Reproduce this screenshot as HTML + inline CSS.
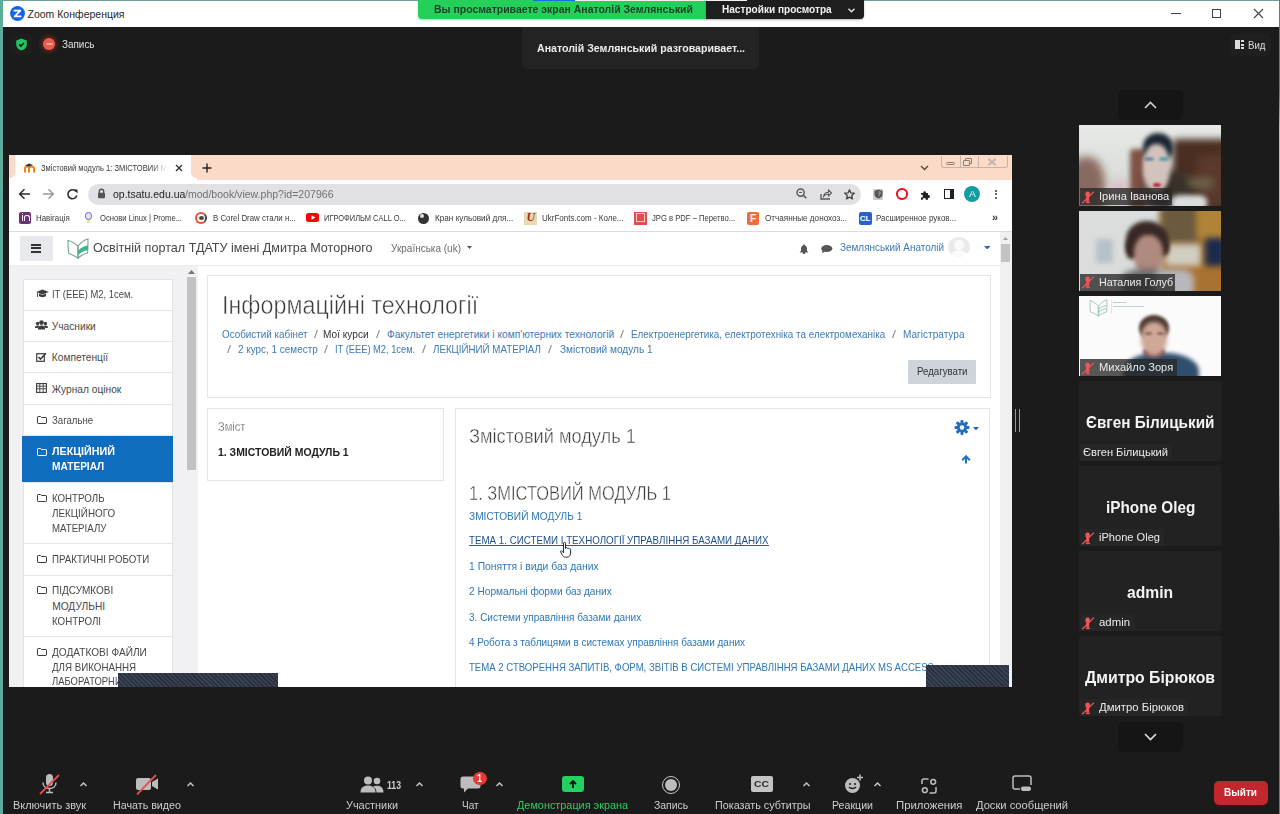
<!DOCTYPE html>
<html><head><meta charset="utf-8"><style>
*{margin:0;padding:0;box-sizing:border-box}
html,body{width:1280px;height:814px;overflow:hidden;position:relative;background:#1b1b1b;font-family:"Liberation Sans",sans-serif}
.a{position:absolute}
.T{position:absolute;white-space:nowrap;line-height:1}
</style></head><body>
<div class="a" style="left:0;top:0;width:1280px;height:1px;background:#6f9f99"></div>
<div class="a" style="left:3px;top:1px;width:1276px;height:26px;background:#fff"></div>
<div class="a" style="left:0;top:0;width:3px;height:814px;background:#5cae9a"></div>
<div class="a" style="left:3px;top:27px;width:1px;height:787px;background:#151515"></div>
<div class="a" style="left:1279px;top:0;width:1px;height:814px;background:linear-gradient(180deg,#3d8a86 0,#3d8a86 90px,#b9bcbf 130px,#b9bcbf 480px,#4f8784 540px,#4f8784 814px)"></div>
<svg class="a" style="left:10px;top:6px" width="15" height="15" viewBox="0 0 15 15"><circle cx="7.5" cy="7.5" r="7.4" fill="#1264e8"/><path d="M4.4 4.7h6L4.6 10.4h6.1" stroke="#fff" stroke-width="1.8" fill="none" stroke-linejoin="round" stroke-linecap="round"/></svg>
<div id="t6" class="T" style="left:27.50px;top:8.88px;font-size:10.50px;color:#1f1f1f;font-weight:normal;font-family:'Liberation Sans', sans-serif;">Zoom Конференция</div>
<div class="a" style="left:1171px;top:13px;width:10px;height:1px;background:#444"></div>
<div class="a" style="left:1212px;top:9px;width:9px;height:9px;border:1px solid #444"></div>
<svg class="a" style="left:1253px;top:8px" width="11" height="11" viewBox="0 0 11 11"><path d="M1 1L10 10M10 1L1 10" stroke="#444" stroke-width="1.1"/></svg>
<div class="a" style="left:418px;top:0;width:289px;height:19px;background:#25d05a;border-radius:0 0 0 4px;box-shadow:0 1px 2px rgba(0,0,0,.25)"></div>
<div id="t11" class="T" style="left:433.50px;top:4.22px;font-size:10.80px;color:#1d3f27;font-weight:bold;font-family:'Liberation Sans', sans-serif;transform:scaleX(0.9700);transform-origin:0 0;">Вы просматриваете экран Анатолій Землянський</div>
<div class="a" style="left:706px;top:0;width:158px;height:19px;background:#1e1e1e;border-radius:0 0 4px 0;box-shadow:0 1px 2px rgba(0,0,0,.3)"></div>
<div id="t13" class="T" style="left:721.70px;top:4.22px;font-size:10.80px;color:#f2f2f2;font-weight:bold;font-family:'Liberation Sans', sans-serif;transform:scaleX(0.9327);transform-origin:0 0;">Настройки просмотра</div>
<div class="a" style="left:533px;top:0;width:42px;height:1px;background:#1a6ee0"></div>
<div class="a" style="left:575px;top:0;width:172px;height:1px;background:#f4f0f0"></div>
<svg class="a" style="left:847px;top:7px" width="9" height="7" viewBox="0 0 9 7"><path d="M1.5 1.8L4.5 4.8L7.5 1.8" stroke="#e0e0e0" stroke-width="1.5" fill="none"/></svg>
<div class="a" style="left:11px;top:34px;width:21px;height:21px;background:#1e1e1e;border-radius:4px"></div>
<svg class="a" style="left:15px;top:38px" width="13" height="13" viewBox="0 0 13 13"><path d="M6.5 0.6L11.8 2.6V6.4C11.8 9.4 9.5 11.6 6.5 12.5C3.5 11.6 1.2 9.4 1.2 6.4V2.6Z" fill="#24c35d"/><path d="M4.1 6.4L5.8 8.1L8.9 4.9" stroke="#1b1b1b" stroke-width="1.5" fill="none"/></svg>
<div class="a" style="left:43px;top:38px;width:12px;height:12px;border-radius:50%;background:#ee5a4c;box-shadow:0 0 4px 2px rgba(200,60,40,.4)"></div>
<div class="a" style="left:45.5px;top:43px;width:7px;height:2px;background:#f9a496;border-radius:1px"></div>
<div id="t21" class="T" style="left:62.00px;top:39.02px;font-size:10.80px;color:#e2e2e2;font-weight:normal;font-family:'Liberation Sans', sans-serif;transform:scaleX(0.9171);transform-origin:0 0;">Запись</div>
<div class="a" style="left:522px;top:27px;width:237px;height:42px;background:#232323;border-radius:0 0 6px 6px"></div>
<div id="t23" class="T" style="left:537.00px;top:43.02px;font-size:11.50px;color:#ececec;font-weight:bold;font-family:'Liberation Sans', sans-serif;transform:scaleX(0.9195);transform-origin:0 0;">Анатолій Землянський разговаривает...</div>
<div class="a" style="left:1230px;top:34px;width:41px;height:22px;background:#1f1f1f;border-radius:5px"></div>
<div class="a" style="left:1235px;top:40px;width:5px;height:9px;background:#dcdcdc"></div>
<div class="a" style="left:1241px;top:40px;width:3px;height:2px;background:#dcdcdc"></div>
<div class="a" style="left:1241px;top:43.5px;width:3px;height:2px;background:#dcdcdc"></div>
<div class="a" style="left:1241px;top:47px;width:3px;height:2px;background:#dcdcdc"></div>
<div id="t29" class="T" style="left:1248.00px;top:39.68px;font-size:11.20px;color:#dedede;font-weight:normal;font-family:'Liberation Sans', sans-serif;transform:scaleX(0.8642);transform-origin:0 0;">Вид</div>
<div class="a" style="left:1015px;top:409px;width:1.2px;height:23px;background:#9a9a9a"></div>
<div class="a" style="left:1019px;top:409px;width:1.2px;height:23px;background:#9a9a9a"></div>
<div class="a" style="left:9px;top:155px;width:1003px;height:532px;background:#fff"></div>
<div class="a" style="left:9px;top:155px;width:1003px;height:25px;background:#fcdac8"></div>
<div class="a" style="left:15px;top:155px;width:176px;height:26px;background:#fff;border-radius:0"></div>
<div class="a" style="left:9px;top:172px;width:6px;height:8px;background:radial-gradient(circle at 0 0,#fcdac8 6px,#fff 6.5px)"></div>
<div class="a" style="left:191px;top:172px;width:6px;height:8px;background:radial-gradient(circle at 100% 0,#fcdac8 6px,#fff 6.5px)"></div>
<svg class="a" style="left:24px;top:163px" width="12" height="10" viewBox="0 0 12 10"><path d="M1 9.5V5.5C1 4 2 3.5 3 3.5S5 4 5 5.5V9.5M5 5.5C5 4 6 3.5 7.5 3.5S10 4 10 5.5V9.5" stroke="#f98012" stroke-width="2" fill="none"/><path d="M1 2.5L5 0.5L9 2L5 3.5Z" fill="#333"/></svg>
<div id="t38" class="T" style="left:40.80px;top:163.95px;font-size:9.00px;color:#3a3a3a;font-weight:normal;font-family:'Liberation Sans', sans-serif;transform:scaleX(0.8391);transform-origin:0 0;-webkit-mask-image:linear-gradient(90deg,#000 88%,transparent);">Змістовий модуль 1: ЗМІСТОВИЙ М</div>
<svg class="a" style="left:175px;top:164px" width="8" height="8" viewBox="0 0 8 8"><path d="M1 1L7 7M7 1L1 7" stroke="#333" stroke-width="1.4"/></svg>
<svg class="a" style="left:202px;top:163px" width="10" height="10" viewBox="0 0 10 10"><path d="M5 0.5V9.5M0.5 5H9.5" stroke="#222" stroke-width="1.4"/></svg>
<svg class="a" style="left:920px;top:165px" width="9" height="6" viewBox="0 0 9 6"><path d="M1 1L4.5 4.5L8 1" stroke="#5a4a44" stroke-width="1.5" fill="none"/></svg>
<div class="a" style="left:941px;top:155.5px;width:67px;height:12.5px;border:1px solid #c8b2a6;border-top:none;border-radius:0 0 3px 3px"></div>
<div class="a" style="left:959.5px;top:155.5px;width:1px;height:12px;background:#c8b2a6"></div>
<div class="a" style="left:977.5px;top:155.5px;width:1px;height:12px;background:#c8b2a6"></div>
<div class="a" style="left:945.5px;top:161.5px;width:9px;height:3.5px;border:1px solid #8a7a72;border-radius:1.5px"></div>
<div class="a" style="left:965px;top:158px;width:7px;height:6px;border:1px solid #8a7a72;border-radius:1px"></div>
<div class="a" style="left:963px;top:160px;width:7px;height:6px;border:1px solid #8a7a72;border-radius:1px;background:#fcdac8"></div>
<svg class="a" style="left:987px;top:158px" width="10" height="8" viewBox="0 0 10 8"><path d="M1.5 1L8.5 7M8.5 1L1.5 7" stroke="#c4b4ac" stroke-width="1.8"/></svg>
<svg class="a" style="left:18px;top:188px" width="13" height="12" viewBox="0 0 13 12"><path d="M12 6H2M6.5 1.2L1.6 6L6.5 10.8" stroke="#2a2a2a" stroke-width="1.5" fill="none"/></svg>
<svg class="a" style="left:42px;top:188px" width="13" height="12" viewBox="0 0 13 12"><path d="M1 6H11M6.5 1.2L11.4 6L6.5 10.8" stroke="#9a9a9a" stroke-width="1.5" fill="none"/></svg>
<svg class="a" style="left:66px;top:187.5px" width="13" height="13" viewBox="0 0 13 13"><path d="M10.8 7.5A4.5 4.5 0 1 1 9.8 3.2" stroke="#2a2a2a" stroke-width="1.6" fill="none"/><path d="M7.5 1.5H11.5V5.5Z" fill="#2a2a2a"/></svg>
<div class="a" style="left:88px;top:183.5px;width:773px;height:21px;border-radius:10.5px;background:#e1e0e4"></div>
<svg class="a" style="left:97px;top:188px" width="9" height="11" viewBox="0 0 9 11"><path d="M2.3 5V3.5A2.2 2.2 0 0 1 6.7 3.5V5" stroke="#555" stroke-width="1.4" fill="none"/><rect x="1" y="4.8" width="7" height="5.5" rx="1" fill="#555"/></svg>
<div id="t54" class="T" style="left:112.50px;top:188.65px;font-size:11.00px;color:#222;font-weight:normal;font-family:'Liberation Sans', sans-serif;transform:scaleX(0.9533);transform-origin:0 0;">op.tsatu.edu.ua</div>
<div id="t55" class="T" style="left:184.80px;top:188.65px;font-size:11.00px;color:#707070;font-weight:normal;font-family:'Liberation Sans', sans-serif;transform:scaleX(0.9578);transform-origin:0 0;">/mod/book/view.php?id=207966</div>
<svg class="a" style="left:796px;top:188px" width="11" height="11" viewBox="0 0 11 11"><circle cx="4.6" cy="4.6" r="3.6" stroke="#555" stroke-width="1.4" fill="none"/><path d="M7.3 7.3L10.3 10.3" stroke="#555" stroke-width="1.6"/><path d="M3 4.4H6.2" stroke="#555" stroke-width="1"/></svg>
<svg class="a" style="left:819.5px;top:188.5px" width="12" height="11" viewBox="0 0 12 11"><path d="M1 5V10H10" stroke="#555" stroke-width="1.3" fill="none"/><path d="M3.5 7.5C4 4.5 6 3.2 8.5 3.2V1L11.5 4L8.5 7V5C6.5 5 5 5.8 3.5 7.5Z" stroke="#555" stroke-width="1.1" fill="none"/></svg>
<svg class="a" style="left:843.5px;top:188.5px" width="11" height="11" viewBox="0 0 11 11"><path d="M5.5 0.8L6.9 3.9L10.3 4.2L7.7 6.5L8.5 9.9L5.5 8.1L2.5 9.9L3.3 6.5L0.7 4.2L4.1 3.9Z" stroke="#444" stroke-width="1.3" fill="none" stroke-linejoin="round"/></svg>
<div class="a" style="left:872.5px;top:188.5px;width:10.5px;height:11px;background:#c9c9c9;border-radius:1px"></div>
<svg class="a" style="left:873.5px;top:189px" width="9" height="10" viewBox="0 0 9 10"><path d="M4.5 0.5L8.5 2V5C8.5 7.5 6.5 9 4.5 9.5C2.5 9 0.5 7.5 0.5 5V2Z" fill="#555"/><path d="M4.5 1.5V8.5L7.5 3Z" fill="#888"/></svg>
<div class="a" style="left:896px;top:188px;width:11.5px;height:11.5px;border-radius:50%;border:2.6px solid #ee0a17"></div>
<svg class="a" style="left:919.5px;top:189.5px" width="11" height="10" viewBox="0 0 11 10"><path d="M1 3H3.3A1.4 1.4 0 1 1 6 3H8V5.2A1.4 1.4 0 1 1 8 7.8V9.8H5.6A1.4 1.4 0 1 0 3 9.8H1V7.4A1.4 1.4 0 1 0 1 4.8Z" fill="#222"/></svg>
<div class="a" style="left:943.5px;top:189px;width:10px;height:9.5px;border:1.5px solid #222;border-right-width:4px"></div>
<div class="a" style="left:964px;top:186px;width:16px;height:16px;border-radius:50%;background:#139ca2"></div>
<div id="t65" class="T" style="left:968.50px;top:190.35px;font-size:9.00px;color:#e8f6f6;font-weight:normal;font-family:'Liberation Sans', sans-serif;transform:scaleX(1.1636);transform-origin:0 0;">A</div>
<div class="a" style="left:995px;top:189.5px;width:2.2px;height:2.2px;border-radius:50%;background:#333"></div>
<div class="a" style="left:995px;top:193px;width:2.2px;height:2.2px;border-radius:50%;background:#333"></div>
<div class="a" style="left:995px;top:196.5px;width:2.2px;height:2.2px;border-radius:50%;background:#333"></div>
<div class="a" style="left:19px;top:212px;width:12px;height:12px;border-radius:2px;background:#6b3275"></div>
<div class="a" style="left:21.5px;top:214.5px;width:1.8px;height:6px;background:#fff"></div>
<div class="a" style="left:21.5px;top:212.8px;width:1.8px;height:1.3px;background:#fff"></div>
<div class="a" style="left:24.3px;top:214.5px;width:5.5px;height:6px;border:1.8px solid #fff;border-bottom:none;border-radius:2.5px 2.5px 0 0"></div>
<div id="t73" class="T" style="left:36.30px;top:212.83px;font-size:9.50px;color:#3a3a3a;font-weight:normal;font-family:'Liberation Sans', sans-serif;transform:scaleX(0.8311);transform-origin:0 0;">Навігація</div>
<div class="a" style="left:84.5px;top:212.4px;width:7.5px;height:7.5px;border-radius:50%;border:1.6px solid #6a5fd0;background:#e8e4f4"></div>
<div class="a" style="left:86.7px;top:220px;width:3px;height:2.5px;background:#f4ea70"></div>
<div id="t76" class="T" style="left:100.00px;top:212.83px;font-size:9.50px;color:#3a3a3a;font-weight:normal;font-family:'Liberation Sans', sans-serif;transform:scaleX(0.8037);transform-origin:0 0;">Основи Linux | Prome...</div>
<div class="a" style="left:195px;top:212px;width:12px;height:12px;border-radius:50%;border:2px solid #e8552f;border-right-color:#444"></div>
<div class="a" style="left:199px;top:216px;width:5px;height:4px;border-radius:50%;background:#444"></div>
<div id="t79" class="T" style="left:212.50px;top:212.83px;font-size:9.50px;color:#3a3a3a;font-weight:normal;font-family:'Liberation Sans', sans-serif;transform:scaleX(0.8275);transform-origin:0 0;">В Corel Draw стали н...</div>
<div class="a" style="left:306px;top:213px;width:12.5px;height:9px;border-radius:2.5px;background:#f00"></div>
<svg class="a" style="left:310.5px;top:215px" width="5" height="5" viewBox="0 0 5 5"><path d="M0.5 0.3L4.5 2.5L0.5 4.7Z" fill="#fff"/></svg>
<div id="t82" class="T" style="left:323.80px;top:212.83px;font-size:9.50px;color:#3a3a3a;font-weight:normal;font-family:'Liberation Sans', sans-serif;transform:scaleX(0.7877);transform-origin:0 0;">ИГРОФИЛЬМ CALL O...</div>
<div class="a" style="left:417.7px;top:212.5px;width:11px;height:11px;border-radius:50%;background:#333"></div>
<div class="a" style="left:419.7px;top:214px;width:4px;height:4px;border-radius:50%;background:#ddd"></div>
<div id="t85" class="T" style="left:434.50px;top:212.83px;font-size:9.50px;color:#3a3a3a;font-weight:normal;font-family:'Liberation Sans', sans-serif;transform:scaleX(0.8603);transform-origin:0 0;">Кран кульовий для...</div>
<div class="a" style="left:524.4px;top:211.5px;width:13px;height:13px;background:#e9d8b0"></div>
<div class="a" style="left:526.4px;top:211px;font:italic bold 12px/13px 'Liberation Serif';color:#a2281c">U</div>
<div id="t88" class="T" style="left:542.00px;top:212.83px;font-size:9.50px;color:#3a3a3a;font-weight:normal;font-family:'Liberation Sans', sans-serif;transform:scaleX(0.8409);transform-origin:0 0;">UkrFonts.com - Коле...</div>
<div class="a" style="left:634px;top:211.5px;width:13px;height:13px;background:#e34d4d"></div>
<div class="a" style="left:636px;top:213px;width:9px;height:9px;border:1px solid #fff;opacity:.7"></div>
<div id="t91" class="T" style="left:652.40px;top:212.83px;font-size:9.50px;color:#3a3a3a;font-weight:normal;font-family:'Liberation Sans', sans-serif;transform:scaleX(0.8059);transform-origin:0 0;">JPG в PDF – Перетво...</div>
<div class="a" style="left:747px;top:211.5px;width:12px;height:13px;border-radius:2px;background:#f26b38"></div>
<div class="a" style="left:750px;top:213.5px;font:bold 10px/10px 'Liberation Sans';color:#fff">F</div>
<div id="t94" class="T" style="left:765.00px;top:212.83px;font-size:9.50px;color:#3a3a3a;font-weight:normal;font-family:'Liberation Sans', sans-serif;transform:scaleX(0.8567);transform-origin:0 0;">Отчаянные донохоз...</div>
<div class="a" style="left:858.7px;top:211.5px;width:13px;height:13px;border-radius:2px;background:#2a5fcf"></div>
<div class="a" style="left:859.7px;top:213.5px;font:bold 8px/10px 'Liberation Sans';color:#fff">CL</div>
<div id="t97" class="T" style="left:875.80px;top:212.83px;font-size:9.50px;color:#3a3a3a;font-weight:normal;font-family:'Liberation Sans', sans-serif;transform:scaleX(0.8381);transform-origin:0 0;">Расширенное руков...</div>
<div id="t98" class="T" style="left:991.50px;top:211.55px;font-size:11.00px;color:#333;font-weight:bold;font-family:'Liberation Sans', sans-serif;transform:scaleX(0.9796);transform-origin:0 0;">»</div>
<div class="a" style="left:9px;top:231px;width:1003px;height:1px;background:#dcdcdc"></div>
<div class="a" style="left:9px;top:265px;width:991px;height:1px;background:#ececec"></div>
<div class="a" style="left:20px;top:236px;width:32.5px;height:25px;background:#e8e9ec"></div>
<div class="a" style="left:31px;top:244px;width:10px;height:2px;background:#333"></div>
<div class="a" style="left:31px;top:247.3px;width:10px;height:2px;background:#333"></div>
<div class="a" style="left:31px;top:250.6px;width:10px;height:2px;background:#333"></div>
<svg class="a" style="left:66.5px;top:237.5px" width="22" height="21" viewBox="0 0 22 21"><path d="M1 2.5C4 3 7.5 5 10.8 8V20C7.5 18 4.5 16 1.8 15.5C1 12 1 6 1 2.5Z" stroke="#77a097" stroke-width="1.1" fill="#fff"/><path d="M21 1C18 1.8 14 4 11.2 8V20C14 17.5 17.5 15.5 20.5 15C21 11 21 5 21 1Z" stroke="#77a097" stroke-width="1.1" fill="#fff"/><path d="M11.2 12.5C14 9.5 17.5 8 21 7.5V12C17 12.5 14 14.5 11.2 17Z" fill="#3bb58f"/></svg>
<div id="t106" class="T" style="left:93.00px;top:240.64px;font-size:13.60px;color:#474747;font-weight:normal;font-family:'Liberation Sans', sans-serif;transform:scaleX(0.9262);transform-origin:0 0;">Освітній портал ТДАТУ імені Дмитра Моторного</div>
<div id="t107" class="T" style="left:391.00px;top:242.82px;font-size:10.80px;color:#6a6a6a;font-weight:normal;font-family:'Liberation Sans', sans-serif;transform:scaleX(0.9252);transform-origin:0 0;">Українська (uk)</div>
<svg class="a" style="left:467px;top:246px" width="5" height="3" viewBox="0 0 5 3"><path d="M0 0H5L2.5 3Z" fill="#555"/></svg>
<svg class="a" style="left:799px;top:243.5px" width="10" height="10" viewBox="0 0 10 10"><path d="M5 0.5C5.6 0.5 6 1 6 1.5C7.5 2 8 3.3 8 5V7L9.5 8.5H0.5L2 7V5C2 3.3 2.5 2 4 1.5C4 1 4.4 0.5 5 0.5Z" fill="#555"/><circle cx="5" cy="9" r="1.2" fill="#555"/></svg>
<svg class="a" style="left:821px;top:245px" width="11.5" height="8.5" viewBox="0 0 11.5 8.5"><ellipse cx="5.75" cy="3.6" rx="5.6" ry="3.5" fill="#555"/><path d="M1.5 5.5L1 8.3L4 6.5Z" fill="#555"/></svg>
<div id="t111" class="T" style="left:839.80px;top:243.16px;font-size:10.40px;color:#3f78b3;font-weight:normal;font-family:'Liberation Sans', sans-serif;transform:scaleX(0.9552);transform-origin:0 0;">Землянський Анатолій</div>
<div class="a" style="left:947.5px;top:237px;width:22px;height:20px;border-radius:50%;background:#eaeaea;overflow:hidden"><div class="a" style="left:6px;top:3px;width:10px;height:10px;border-radius:50%;background:#fafafa"></div><div class="a" style="left:3px;top:13px;width:16px;height:12px;border-radius:50%;background:#fafafa"></div></div>
<svg class="a" style="left:983.5px;top:245.5px" width="6.5" height="3.5" viewBox="0 0 6.5 3.5"><path d="M0 0H6.5L3.25 3.5Z" fill="#1f6fbf"/></svg>
<div class="a" style="left:1000px;top:232px;width:11.5px;height:455px;background:#f0f0f2"></div>
<svg class="a" style="left:1002.5px;top:237px" width="5" height="3" viewBox="0 0 5 3"><path d="M0 3H5L2.5 0Z" fill="#a0a0a0"/></svg>
<div class="a" style="left:1001.2px;top:244px;width:8.6px;height:17.5px;background:#c3c3c3"></div>
<div class="a" style="left:9px;top:266px;width:188.5px;height:421px;background:#f1f0f3"></div>
<div class="a" style="left:187px;top:276.8px;width:9px;height:193px;background:#c2c2c2"></div>
<svg class="a" style="left:188px;top:270px" width="7" height="4" viewBox="0 0 7 4"><path d="M0 4H7L3.5 0Z" fill="#777"/></svg>
<div class="a" style="left:22.5px;top:278.5px;width:150px;height:420px;background:#fff;border:1px solid #e3e3e3"></div>
<div class="a" style="left:23px;top:309.5px;width:149px;height:1px;background:#e6e6e6"></div>
<div class="a" style="left:23px;top:340.8px;width:149px;height:1px;background:#e6e6e6"></div>
<div class="a" style="left:23px;top:372.2px;width:149px;height:1px;background:#e6e6e6"></div>
<div class="a" style="left:23px;top:403.7px;width:149px;height:1px;background:#e6e6e6"></div>
<div class="a" style="left:23px;top:435.2px;width:149px;height:1px;background:#e6e6e6"></div>
<div class="a" style="left:23px;top:481.7px;width:149px;height:1px;background:#e6e6e6"></div>
<div class="a" style="left:23px;top:543.0px;width:149px;height:1px;background:#e6e6e6"></div>
<div class="a" style="left:23px;top:574.5px;width:149px;height:1px;background:#e6e6e6"></div>
<div class="a" style="left:23px;top:635.9px;width:149px;height:1px;background:#e6e6e6"></div>
<div class="a" style="left:22px;top:435.7px;width:150.5px;height:46.5px;background:#0f6cbf"></div>
<svg class="a" style="left:35.5px;top:289px" width="13" height="10" viewBox="0 0 13 10"><path d="M6.5 0.5L12.8 3L6.5 5.5L0.2 3Z" fill="#3d3d3d"/><path d="M3 4.5V7C4.5 8.5 8.5 8.5 10 7V4.5L6.5 6Z" fill="#3d3d3d"/><path d="M1.5 3.5V8" stroke="#3d3d3d" stroke-width="0.9"/></svg>
<svg class="a" style="left:35px;top:320px" width="13" height="10" viewBox="0 0 13 10"><circle cx="6.5" cy="2.6" r="2.3" fill="#3d3d3d"/><circle cx="2.6" cy="3.5" r="1.7" fill="#3d3d3d"/><circle cx="10.4" cy="3.5" r="1.7" fill="#3d3d3d"/><path d="M2.8 9.5C2.8 6.5 4.2 5.5 6.5 5.5S10.2 6.5 10.2 9.5Z" fill="#3d3d3d"/><path d="M0 8C0 6.2 1 5.5 2.6 5.5S4 6 4 6.5L2.5 8Z" fill="#3d3d3d"/><path d="M13 8C13 6.2 12 5.5 10.4 5.5S9 6 9 6.5L10.5 8Z" fill="#3d3d3d"/></svg>
<svg class="a" style="left:36px;top:351.5px" width="11" height="10" viewBox="0 0 11 10"><rect x="0.7" y="1.7" width="7.6" height="7.6" stroke="#3d3d3d" stroke-width="1.2" fill="none"/><path d="M2.5 5L4.5 7L10 1.2" stroke="#3d3d3d" stroke-width="1.6" fill="none"/></svg>
<svg class="a" style="left:36px;top:383px" width="11" height="10" viewBox="0 0 11 10"><rect x="0.6" y="0.6" width="9.8" height="8.8" stroke="#3d3d3d" stroke-width="1.1" fill="none"/><path d="M0.6 3.2H10.4M0.6 5.8H10.4M3.8 0.6V9.4M7.2 0.6V9.4" stroke="#3d3d3d" stroke-width="0.9"/></svg>
<svg class="a" style="left:36.5px;top:416.0px" width="10" height="8" viewBox="0 0 10 8"><path d="M0.5 1.1C0.5 0.8 0.8 0.5 1.1 0.5H3.6L4.5 1.5H8.9C9.2 1.5 9.5 1.8 9.5 2.1V6.9C9.5 7.2 9.2 7.5 8.9 7.5H1.1C0.8 7.5 0.5 7.2 0.5 6.9Z" stroke="#3d3d3d" stroke-width="1" fill="none"/></svg>
<svg class="a" style="left:36.5px;top:493.5px" width="10" height="8" viewBox="0 0 10 8"><path d="M0.5 1.1C0.5 0.8 0.8 0.5 1.1 0.5H3.6L4.5 1.5H8.9C9.2 1.5 9.5 1.8 9.5 2.1V6.9C9.5 7.2 9.2 7.5 8.9 7.5H1.1C0.8 7.5 0.5 7.2 0.5 6.9Z" stroke="#3d3d3d" stroke-width="1" fill="none"/></svg>
<svg class="a" style="left:36.5px;top:554.5px" width="10" height="8" viewBox="0 0 10 8"><path d="M0.5 1.1C0.5 0.8 0.8 0.5 1.1 0.5H3.6L4.5 1.5H8.9C9.2 1.5 9.5 1.8 9.5 2.1V6.9C9.5 7.2 9.2 7.5 8.9 7.5H1.1C0.8 7.5 0.5 7.2 0.5 6.9Z" stroke="#3d3d3d" stroke-width="1" fill="none"/></svg>
<svg class="a" style="left:36.5px;top:586.0px" width="10" height="8" viewBox="0 0 10 8"><path d="M0.5 1.1C0.5 0.8 0.8 0.5 1.1 0.5H3.6L4.5 1.5H8.9C9.2 1.5 9.5 1.8 9.5 2.1V6.9C9.5 7.2 9.2 7.5 8.9 7.5H1.1C0.8 7.5 0.5 7.2 0.5 6.9Z" stroke="#3d3d3d" stroke-width="1" fill="none"/></svg>
<svg class="a" style="left:36.5px;top:647.5px" width="10" height="8" viewBox="0 0 10 8"><path d="M0.5 1.1C0.5 0.8 0.8 0.5 1.1 0.5H3.6L4.5 1.5H8.9C9.2 1.5 9.5 1.8 9.5 2.1V6.9C9.5 7.2 9.2 7.5 8.9 7.5H1.1C0.8 7.5 0.5 7.2 0.5 6.9Z" stroke="#3d3d3d" stroke-width="1" fill="none"/></svg>
<svg class="a" style="left:36.5px;top:447.5px" width="10" height="8" viewBox="0 0 10 8"><path d="M0.5 1.1C0.5 0.8 0.8 0.5 1.1 0.5H3.6L4.5 1.5H8.9C9.2 1.5 9.5 1.8 9.5 2.1V6.9C9.5 7.2 9.2 7.5 8.9 7.5H1.1C0.8 7.5 0.5 7.2 0.5 6.9Z" stroke="#fff" stroke-width="1" fill="none"/></svg>
<div id="t141" class="T" style="left:51.80px;top:290.43px;font-size:10.20px;color:#484848;font-weight:normal;font-family:'Liberation Sans', sans-serif;transform:scaleX(0.9227);transform-origin:0 0;">IT (EEE) M2, 1сем.</div>
<div id="t142" class="T" style="left:51.80px;top:321.63px;font-size:10.20px;color:#484848;font-weight:normal;font-family:'Liberation Sans', sans-serif;">Учасники</div>
<div id="t143" class="T" style="left:51.80px;top:352.93px;font-size:10.20px;color:#484848;font-weight:normal;font-family:'Liberation Sans', sans-serif;">Компетенції</div>
<div id="t144" class="T" style="left:51.80px;top:384.63px;font-size:10.20px;color:#484848;font-weight:normal;font-family:'Liberation Sans', sans-serif;">Журнал оцінок</div>
<div id="t145" class="T" style="left:51.80px;top:416.13px;font-size:10.20px;color:#484848;font-weight:normal;font-family:'Liberation Sans', sans-serif;transform:scaleX(0.9464);transform-origin:0 0;">Загальне</div>
<div id="t146" class="T" style="left:51.80px;top:446.63px;font-size:10.20px;color:#fff;font-weight:bold;font-family:'Liberation Sans', sans-serif;transform:scaleX(1.0541);transform-origin:0 0;">ЛЕКЦІЙНИЙ</div>
<div id="t147" class="T" style="left:51.80px;top:461.93px;font-size:10.20px;color:#fff;font-weight:bold;font-family:'Liberation Sans', sans-serif;transform:scaleX(0.9922);transform-origin:0 0;">МАТЕРІАЛ</div>
<div id="t148" class="T" style="left:52.20px;top:493.83px;font-size:10.20px;color:#484848;font-weight:normal;font-family:'Liberation Sans', sans-serif;transform:scaleX(0.9532);transform-origin:0 0;">КОНТРОЛЬ</div>
<div id="t149" class="T" style="left:52.20px;top:509.03px;font-size:10.20px;color:#484848;font-weight:normal;font-family:'Liberation Sans', sans-serif;transform:scaleX(0.9684);transform-origin:0 0;">ЛЕКЦІЙНОГО</div>
<div id="t150" class="T" style="left:52.20px;top:523.53px;font-size:10.20px;color:#484848;font-weight:normal;font-family:'Liberation Sans', sans-serif;transform:scaleX(0.9492);transform-origin:0 0;">МАТЕРІАЛУ</div>
<div id="t151" class="T" style="left:52.20px;top:554.63px;font-size:10.20px;color:#484848;font-weight:normal;font-family:'Liberation Sans', sans-serif;transform:scaleX(0.9514);transform-origin:0 0;">ПРАКТИЧНІ РОБОТИ</div>
<div id="t152" class="T" style="left:52.20px;top:586.33px;font-size:10.20px;color:#484848;font-weight:normal;font-family:'Liberation Sans', sans-serif;transform:scaleX(0.9823);transform-origin:0 0;">ПІДСУМКОВІ</div>
<div id="t153" class="T" style="left:52.20px;top:601.63px;font-size:10.20px;color:#484848;font-weight:normal;font-family:'Liberation Sans', sans-serif;">МОДУЛЬНІ</div>
<div id="t154" class="T" style="left:52.20px;top:616.83px;font-size:10.20px;color:#484848;font-weight:normal;font-family:'Liberation Sans', sans-serif;transform:scaleX(0.9583);transform-origin:0 0;">КОНТРОЛІ</div>
<div id="t155" class="T" style="left:52.20px;top:648.03px;font-size:10.20px;color:#484848;font-weight:normal;font-family:'Liberation Sans', sans-serif;transform:scaleX(0.9919);transform-origin:0 0;">ДОДАТКОВІ ФАЙЛИ</div>
<div id="t156" class="T" style="left:52.20px;top:662.63px;font-size:10.20px;color:#484848;font-weight:normal;font-family:'Liberation Sans', sans-serif;transform:scaleX(0.9572);transform-origin:0 0;">ДЛЯ ВИКОНАННЯ</div>
<div id="t157" class="T" style="left:52.20px;top:677.03px;font-size:10.20px;color:#484848;font-weight:normal;font-family:'Liberation Sans', sans-serif;transform:scaleX(0.9263);transform-origin:0 0;">ЛАБОРАТОРНИХ</div>
<div class="a" style="left:207px;top:275px;width:783.5px;height:122.5px;border:1px solid #e5e5e9;background:#fff"></div>
<div id="t159" class="T" style="left:221.60px;top:292.75px;font-size:25.00px;color:#3a3a3a;font-weight:normal;font-family:'Liberation Sans', sans-serif;transform:scaleX(0.9318);transform-origin:0 0;-webkit-text-stroke:0.5px #fff;">Інформаційні технології</div>
<div id="t160" class="T" style="left:221.60px;top:329.83px;font-size:10.20px;color:#3f7ab3;font-weight:normal;font-family:'Liberation Sans', sans-serif;transform:scaleX(0.9686);transform-origin:0 0;">Особистий кабінет</div>
<div id="t161" class="T" style="left:313.50px;top:329.83px;font-size:10.20px;color:#8a8a8a;font-weight:normal;font-family:'Liberation Sans', sans-serif;transform:scaleX(1.4066);transform-origin:0 0;">/</div>
<div id="t162" class="T" style="left:323.00px;top:329.83px;font-size:10.20px;color:#333;font-weight:normal;font-family:'Liberation Sans', sans-serif;transform:scaleX(0.9927);transform-origin:0 0;">Мої курси</div>
<div id="t163" class="T" style="left:375.50px;top:329.83px;font-size:10.20px;color:#8a8a8a;font-weight:normal;font-family:'Liberation Sans', sans-serif;transform:scaleX(1.4066);transform-origin:0 0;">/</div>
<div id="t164" class="T" style="left:386.90px;top:329.83px;font-size:10.20px;color:#3f7ab3;font-weight:normal;font-family:'Liberation Sans', sans-serif;">Факультет енергетики і комп&#x27;ютерних технологій</div>
<div id="t165" class="T" style="left:620.00px;top:329.83px;font-size:10.20px;color:#8a8a8a;font-weight:normal;font-family:'Liberation Sans', sans-serif;transform:scaleX(1.4066);transform-origin:0 0;">/</div>
<div id="t166" class="T" style="left:630.80px;top:329.83px;font-size:10.20px;color:#3f7ab3;font-weight:normal;font-family:'Liberation Sans', sans-serif;transform:scaleX(0.9698);transform-origin:0 0;">Електроенергетика, електротехніка та електромеханіка</div>
<div id="t167" class="T" style="left:891.50px;top:329.83px;font-size:10.20px;color:#8a8a8a;font-weight:normal;font-family:'Liberation Sans', sans-serif;transform:scaleX(1.4066);transform-origin:0 0;">/</div>
<div id="t168" class="T" style="left:903.00px;top:329.83px;font-size:10.20px;color:#3f7ab3;font-weight:normal;font-family:'Liberation Sans', sans-serif;transform:scaleX(0.9884);transform-origin:0 0;">Магістратура</div>
<div id="t169" class="T" style="left:226.50px;top:345.03px;font-size:10.20px;color:#8a8a8a;font-weight:normal;font-family:'Liberation Sans', sans-serif;transform:scaleX(1.4066);transform-origin:0 0;">/</div>
<div id="t170" class="T" style="left:238.00px;top:345.03px;font-size:10.20px;color:#3f7ab3;font-weight:normal;font-family:'Liberation Sans', sans-serif;transform:scaleX(0.9740);transform-origin:0 0;">2 курс, 1 семестр</div>
<div id="t171" class="T" style="left:324.00px;top:345.03px;font-size:10.20px;color:#8a8a8a;font-weight:normal;font-family:'Liberation Sans', sans-serif;transform:scaleX(1.4066);transform-origin:0 0;">/</div>
<div id="t172" class="T" style="left:335.30px;top:345.03px;font-size:10.20px;color:#3f7ab3;font-weight:normal;font-family:'Liberation Sans', sans-serif;transform:scaleX(0.9136);transform-origin:0 0;">IT (EEE) M2, 1сем.</div>
<div id="t173" class="T" style="left:421.50px;top:345.03px;font-size:10.20px;color:#8a8a8a;font-weight:normal;font-family:'Liberation Sans', sans-serif;transform:scaleX(1.4066);transform-origin:0 0;">/</div>
<div id="t174" class="T" style="left:432.60px;top:345.03px;font-size:10.20px;color:#3f7ab3;font-weight:normal;font-family:'Liberation Sans', sans-serif;transform:scaleX(0.9576);transform-origin:0 0;">ЛЕКЦІЙНИЙ МАТЕРІАЛ</div>
<div id="t175" class="T" style="left:547.80px;top:345.03px;font-size:10.20px;color:#8a8a8a;font-weight:normal;font-family:'Liberation Sans', sans-serif;transform:scaleX(1.4066);transform-origin:0 0;">/</div>
<div id="t176" class="T" style="left:559.70px;top:345.03px;font-size:10.20px;color:#3f7ab3;font-weight:normal;font-family:'Liberation Sans', sans-serif;transform:scaleX(0.9928);transform-origin:0 0;">Змістовий модуль 1</div>
<div class="a" style="left:907.5px;top:360px;width:68.5px;height:23.6px;background:#ced4da;border-radius:1px"></div>
<div id="t178" class="T" style="left:916.50px;top:366.83px;font-size:10.20px;color:#333;font-weight:normal;font-family:'Liberation Sans', sans-serif;transform:scaleX(0.9472);transform-origin:0 0;">Редагувати</div>
<div class="a" style="left:207px;top:408.3px;width:237.4px;height:73.2px;border:1px solid #e5e5e9;background:#fff"></div>
<div id="t180" class="T" style="left:218.20px;top:420.80px;font-size:12.00px;color:#333;font-weight:normal;font-family:'Liberation Sans', sans-serif;transform:scaleX(0.9234);transform-origin:0 0;-webkit-text-stroke:0.35px #fff;">Зміст</div>
<div id="t181" class="T" style="left:218.20px;top:448.10px;font-size:10.00px;color:#222;font-weight:bold;font-family:'Liberation Sans', sans-serif;transform:scaleX(1.0440);transform-origin:0 0;">1. ЗМІСТОВИЙ МОДУЛЬ 1</div>
<div class="a" style="left:455.4px;top:408.2px;width:534.6px;height:300px;border:1px solid #e5e5e9;background:#fff"></div>
<div id="t183" class="T" style="left:469.00px;top:425.57px;font-size:20.50px;color:#3a3a3a;font-weight:normal;font-family:'Liberation Sans', sans-serif;transform:scaleX(0.8878);transform-origin:0 0;-webkit-text-stroke:0.45px #fff;">Змістовий модуль 1</div>
<svg class="a" style="left:953.5px;top:420px" width="16" height="15" viewBox="0 0 16 15"><g fill="#1f6fc0"><circle cx="8" cy="7.5" r="5"/><rect x="6.5" y="0" width="3" height="15" rx="1"/><rect x="0.5" y="6" width="15" height="3" rx="1"/><rect x="6.5" y="0" width="3" height="15" rx="1" transform="rotate(45 8 7.5)"/><rect x="6.5" y="0" width="3" height="15" rx="1" transform="rotate(-45 8 7.5)"/></g><circle cx="8" cy="7.5" r="2.2" fill="#fff"/></svg>
<svg class="a" style="left:973px;top:426.5px" width="6" height="3.5" viewBox="0 0 6 3.5"><path d="M0 0H6L3 3.5Z" fill="#1f6fc0"/></svg>
<svg class="a" style="left:960.5px;top:455px" width="10" height="9" viewBox="0 0 10 9"><path d="M5 8.5V1.8M1.2 5.2L5 1.3L8.8 5.2" stroke="#1f6fc0" stroke-width="2" fill="none"/></svg>
<div id="t187" class="T" style="left:469.00px;top:484.03px;font-size:19.50px;color:#3a3a3a;font-weight:normal;font-family:'Liberation Sans', sans-serif;transform:scaleX(0.8444);transform-origin:0 0;-webkit-text-stroke:0.45px #fff;">1. ЗМІСТОВИЙ МОДУЛЬ 1</div>
<div id="t188" class="T" style="left:469.00px;top:510.68px;font-size:10.50px;color:#2f78b7;font-weight:normal;font-family:'Liberation Sans', sans-serif;transform:scaleX(0.9672);transform-origin:0 0;">ЗМІСТОВИЙ МОДУЛЬ 1</div>
<div id="t189" class="T" style="left:469.00px;top:535.08px;font-size:10.50px;color:#1f4f8a;font-weight:normal;font-family:'Liberation Sans', sans-serif;transform:scaleX(0.9290);transform-origin:0 0;">ТЕМА 1. СИСТЕМИ І ТЕХНОЛОГІЇ УПРАВЛІННЯ БАЗАМИ ДАНИХ</div>
<div class="a" style="left:469px;top:545.3px;width:299.5px;height:1px;background:#2a5a92"></div>
<div id="t191" class="T" style="left:469.00px;top:561.08px;font-size:10.50px;color:#2f78b7;font-weight:normal;font-family:'Liberation Sans', sans-serif;transform:scaleX(0.9851);transform-origin:0 0;">1 Поняття  і види баз даних</div>
<div id="t192" class="T" style="left:469.00px;top:586.38px;font-size:10.50px;color:#2f78b7;font-weight:normal;font-family:'Liberation Sans', sans-serif;transform:scaleX(0.9638);transform-origin:0 0;">2 Нормальні форми баз даних</div>
<div id="t193" class="T" style="left:469.00px;top:611.78px;font-size:10.50px;color:#2f78b7;font-weight:normal;font-family:'Liberation Sans', sans-serif;transform:scaleX(0.9538);transform-origin:0 0;">3. Системи управління базами даних</div>
<div id="t194" class="T" style="left:469.00px;top:637.08px;font-size:10.50px;color:#2f78b7;font-weight:normal;font-family:'Liberation Sans', sans-serif;transform:scaleX(0.9518);transform-origin:0 0;">4 Робота з таблицями в системах управління базами даних</div>
<div id="t195" class="T" style="left:469.00px;top:662.08px;font-size:10.50px;color:#2f78b7;font-weight:normal;font-family:'Liberation Sans', sans-serif;transform:scaleX(0.9130);transform-origin:0 0;">ТЕМА 2 СТВОРЕННЯ ЗАПИТІВ, ФОРМ, ЗВІТІВ В СИСТЕМІ УПРАВЛІННЯ БАЗАМИ ДАНИХ MS ACCESS</div>
<svg class="a" style="left:560px;top:542px" width="12" height="16" viewBox="0 0 12 16"><path d="M3.5 1.2C3.5 0.6 4 0.3 4.5 0.3S5.5 0.6 5.5 1.2V6.5L5.8 5.8C6.3 5.4 7.2 5.6 7.4 6.3C7.9 5.9 8.8 6.1 9 6.8C9.5 6.5 10.5 6.7 10.6 7.5V11C10.6 13 9.5 15.2 7 15.2H5.5C3.8 15.2 3 14.2 2 12.5L0.6 9.8C0.3 9.2 0.7 8.6 1.3 8.7C1.8 8.8 2.5 9.6 3.5 10.8Z" fill="#fff" stroke="#111" stroke-width="0.9"/></svg>
<div class="a" style="left:118px;top:672.6px;width:160px;height:14.4px;background:repeating-linear-gradient(45deg,#283040 0 1.6px,#3a4352 1.6px 3.2px)"></div>
<div class="a" style="left:925.8px;top:665px;width:83px;height:22px;background:repeating-linear-gradient(45deg,#283040 0 1.6px,#3a4352 1.6px 3.2px)"></div>
<div class="a" style="left:9px;top:687px;width:1003px;height:40px;background:#1b1b1b"></div>
<div class="a" style="left:1118px;top:90px;width:65px;height:30px;border-radius:5px;background:#151515"></div>
<svg class="a" style="left:1143px;top:100px" width="15" height="10" viewBox="0 0 15 10"><path d="M2 8L7.5 2.5L13 8" stroke="#d0d0d0" stroke-width="1.6" fill="none"/></svg>
<div class="a" style="left:1118px;top:722px;width:65px;height:30px;border-radius:5px;background:#151515"></div>
<svg class="a" style="left:1143px;top:732px" width="15" height="10" viewBox="0 0 15 10"><path d="M2 2L7.5 7.5L13 2" stroke="#e0e0e0" stroke-width="1.6" fill="none"/></svg>
<div class="a" style="left:1079px;top:125.3px;width:142px;height:80.5px;overflow:hidden;background:linear-gradient(180deg,#e6e9e5 0%,#dcdfdb 55%,#d2d2cf 100%)">
<div class="a" style="left:-12.0px;top:32.0px;width:38.0px;height:70.0px;background:#8a6a60;border-radius:40%;filter:blur(4.0px);"></div>
<div class="a" style="left:30.0px;top:55.0px;width:20.0px;height:18.0px;background:#dcc0c8;border-radius:50%;filter:blur(4.0px);"></div>
<div class="a" style="left:51.0px;top:24.0px;width:16.0px;height:70.0px;background:#7e5244;border-radius:10%;filter:blur(2.5px);"></div>
<div class="a" style="left:94.0px;top:14.0px;width:60.0px;height:80.0px;background:#4a2e22;border-radius:6%;filter:blur(3.5px);"></div>
<div class="a" style="left:96.0px;top:55.0px;width:30.0px;height:30.0px;background:#2e2420;border-radius:10%;filter:blur(3.0px);"></div>
<div class="a" style="left:118.0px;top:30.0px;width:30.0px;height:50.0px;background:#5a3a2c;border-radius:10%;filter:blur(4.0px);"></div>
<div class="a" style="left:98.0px;top:52.0px;width:36.0px;height:12.0px;background:#6a6048;border-radius:20%;filter:blur(3.5px);"></div>
<div class="a" style="left:66.0px;top:45.0px;width:44.0px;height:40.0px;background:#3a302a;border-radius:30%;filter:blur(4.0px);"></div>
<div class="a" style="left:64.0px;top:8.0px;width:30.0px;height:28.0px;background:#1a2634;border-radius:50% 50% 40% 40%;filter:blur(2.2px);"></div>
<div class="a" style="left:64.0px;top:19.0px;width:27.0px;height:48.0px;background:#d2c3bc;border-radius:46%;filter:blur(2.2px);"></div>
<div class="a" style="left:65.0px;top:32.0px;width:10.0px;height:4.0px;background:#6f8aa0;border-radius:50%;filter:blur(1.3px);"></div>
<div class="a" style="left:80.0px;top:32.0px;width:10.0px;height:4.0px;background:#5aa0ae;border-radius:50%;filter:blur(1.3px);"></div>
<div class="a" style="left:74.0px;top:58.0px;width:8.0px;height:3.5px;background:#b02a3a;border-radius:50%;filter:blur(1.0px);"></div>
<div class="a" style="left:92.0px;top:70.0px;width:36.0px;height:16.0px;background:#dcdedd;border-radius:30%;filter:blur(2.5px);"></div>
</div>
<div class="a" style="left:1079px;top:210.7px;width:142px;height:80.5px;overflow:hidden;background:#d8dbd9">
<div class="a" style="left:-5.0px;top:-5.0px;width:90.0px;height:90.0px;background:#dadddb;border-radius:0;filter:blur(3.0px);"></div>
<div class="a" style="left:17.0px;top:28.0px;width:17.0px;height:24.0px;background:#b8c0c8;border-radius:10%;filter:blur(2.5px);"></div>
<div class="a" style="left:82.0px;top:-5.0px;width:70.0px;height:95.0px;background:#a87230;border-radius:0;filter:blur(3.5px);"></div>
<div class="a" style="left:82.0px;top:-5.0px;width:38.0px;height:38.0px;background:#6c5a40;border-radius:10%;filter:blur(3.5px);"></div>
<div class="a" style="left:118.0px;top:-5.0px;width:28.0px;height:34.0px;background:#b08438;border-radius:10%;filter:blur(3.5px);"></div>
<div class="a" style="left:86.0px;top:33.0px;width:36.0px;height:22.0px;background:#d2cec2;border-radius:10%;filter:blur(3.0px);"></div>
<div class="a" style="left:126.0px;top:27.0px;width:20.0px;height:28.0px;background:#1c2a4c;border-radius:10%;filter:blur(3.0px);"></div>
<div class="a" style="left:47.0px;top:10.0px;width:42.0px;height:36.0px;background:#3a2824;border-radius:50% 50% 30% 30%;filter:blur(2.2px);"></div>
<div class="a" style="left:47.0px;top:28.0px;width:12.0px;height:20.0px;background:#3a2824;border-radius:40%;filter:blur(2.2px);"></div>
<div class="a" style="left:80.0px;top:28.0px;width:10.0px;height:16.0px;background:#3a2824;border-radius:40%;filter:blur(2.2px);"></div>
<div class="a" style="left:55.0px;top:24.0px;width:29.0px;height:40.0px;background:#b08a7e;border-radius:45%;filter:blur(2.2px);"></div>
<div class="a" style="left:42.0px;top:58.0px;width:48.0px;height:30.0px;background:#6a6a6e;border-radius:40%;filter:blur(3.0px);"></div>
<div class="a" style="left:75.0px;top:58.0px;width:40.0px;height:30.0px;background:#b8b8bc;border-radius:35%;filter:blur(3.0px);"></div>
</div>
<div class="a" style="left:1079px;top:296px;width:142px;height:80px;overflow:hidden;background:#fbfbfb">
<svg class="a" style="left:10px;top:3px" width="19" height="18" viewBox="0 0 19 18"><path d="M1 1.5C3.5 2 6.5 4 9.2 6.8V17C6.5 15 4 13.5 1.5 13C1 10 1 5 1 1.5Z" stroke="#8dbcb0" stroke-width="0.8" fill="none"/><path d="M18 0.8C15.5 1.5 12 3.5 9.8 6.8V17C12 15 15 13.5 17.5 13C18 10 18 5 18 0.8Z" stroke="#8dbcb0" stroke-width="0.8" fill="none"/><path d="M9.8 10C12 8 14.5 7 17.5 6.5M9.8 13C12 11 14.5 10 17.5 9.5" stroke="#8dbcb0" stroke-width="0.8" fill="none"/></svg>
<div class="a" style="left:31.5px;top:4px;width:1px;height:14px;background:#dbe9e6"></div>
<div class="a" style="left:34px;top:6px;width:13px;height:1px;background:#b8d4cd"></div>
<div class="a" style="left:34px;top:9.5px;width:31px;height:1.2px;background:#b8d4cd"></div>
<div class="a" style="left:44.0px;top:57.0px;width:76.0px;height:40.0px;background:#2f4d6c;border-radius:45% 45% 0 0;filter:blur(2.2px);"></div>
<div class="a" style="left:64.0px;top:50.0px;width:22.0px;height:12.0px;background:#6a4040;border-radius:50%;filter:blur(1.8px);"></div>
<div class="a" style="left:60.0px;top:19.0px;width:30.0px;height:26.0px;background:#4a382e;border-radius:50%;filter:blur(1.8px);"></div>
<div class="a" style="left:62.0px;top:26.0px;width:26.0px;height:34.0px;background:#cfa898;border-radius:46% 46% 50% 50%;filter:blur(2.0px);"></div>
<div class="a" style="left:66.0px;top:36.0px;width:7.0px;height:2.5px;background:#8a6a60;border-radius:50%;filter:blur(0.9px);"></div>
<div class="a" style="left:78.0px;top:36.0px;width:7.0px;height:2.5px;background:#8a6a60;border-radius:50%;filter:blur(0.9px);"></div>
</div>
<div class="a" style="left:1080px;top:188.3px;width:92.0px;height:17px;background:rgba(40,40,40,.78)"></div>
<svg class="a" style="left:1081px;top:191.0px" width="14" height="13" viewBox="0 0 14 13"><rect x="4.4" y="0.4" width="4.4" height="5.6" rx="2" fill="#ee5656"/><path d="M5.2 5.5H8.2V10.5H5.2Z" fill="#ee5656"/><ellipse cx="6.9" cy="11.3" rx="2.3" ry="0.9" fill="#ee5656"/><path d="M1.2 12.2L12.9 0.6" stroke="#ee5656" stroke-width="1.3"/></svg>
<div id="t249" class="T" style="left:1099.00px;top:191.12px;font-size:11.50px;color:#ececec;font-weight:normal;font-family:'Liberation Sans', sans-serif;transform:scaleX(0.9676);transform-origin:0 0;">Ірина Іванова</div>
<div class="a" style="left:1080px;top:273.7px;width:94.6px;height:17px;background:rgba(40,40,40,.78)"></div>
<svg class="a" style="left:1081px;top:276.4px" width="14" height="13" viewBox="0 0 14 13"><rect x="4.4" y="0.4" width="4.4" height="5.6" rx="2" fill="#ee5656"/><path d="M5.2 5.5H8.2V10.5H5.2Z" fill="#ee5656"/><ellipse cx="6.9" cy="11.3" rx="2.3" ry="0.9" fill="#ee5656"/><path d="M1.2 12.2L12.9 0.6" stroke="#ee5656" stroke-width="1.3"/></svg>
<div id="t252" class="T" style="left:1099.00px;top:276.52px;font-size:11.50px;color:#ececec;font-weight:normal;font-family:'Liberation Sans', sans-serif;transform:scaleX(0.9354);transform-origin:0 0;">Наталия Голуб</div>
<div class="a" style="left:1080px;top:359.0px;width:97.0px;height:17px;background:rgba(40,40,40,.78)"></div>
<svg class="a" style="left:1081px;top:361.7px" width="14" height="13" viewBox="0 0 14 13"><rect x="4.4" y="0.4" width="4.4" height="5.6" rx="2" fill="#ee5656"/><path d="M5.2 5.5H8.2V10.5H5.2Z" fill="#ee5656"/><ellipse cx="6.9" cy="11.3" rx="2.3" ry="0.9" fill="#ee5656"/><path d="M1.2 12.2L12.9 0.6" stroke="#ee5656" stroke-width="1.3"/></svg>
<div id="t255" class="T" style="left:1099.00px;top:361.83px;font-size:11.50px;color:#ececec;font-weight:normal;font-family:'Liberation Sans', sans-serif;transform:scaleX(0.9672);transform-origin:0 0;">Михайло Зоря</div>
<div class="a" style="left:1079px;top:381.3px;width:142px;height:80px;background:#222"></div>
<div id="t257" class="T" style="left:1086.00px;top:413.53px;font-size:16.20px;color:#f4f4f4;font-weight:bold;font-family:'Liberation Sans', sans-serif;transform:scaleX(0.9465);transform-origin:0 0;">Євген Білицький</div>
<div class="a" style="left:1080px;top:444.3px;width:92.0px;height:17px;background:rgba(40,40,40,.78)"></div>
<div id="t259" class="T" style="left:1082.60px;top:447.12px;font-size:11.50px;color:#ececec;font-weight:normal;font-family:'Liberation Sans', sans-serif;transform:scaleX(0.9664);transform-origin:0 0;">Євген Білицький</div>
<div class="a" style="left:1079px;top:466.3px;width:142px;height:80px;background:#222"></div>
<div id="t261" class="T" style="left:1105.70px;top:498.53px;font-size:16.20px;color:#f4f4f4;font-weight:bold;font-family:'Liberation Sans', sans-serif;transform:scaleX(0.9465);transform-origin:0 0;">iPhone Oleg</div>
<div class="a" style="left:1080px;top:529.3px;width:83.5px;height:17px;background:rgba(40,40,40,.78)"></div>
<svg class="a" style="left:1081px;top:532.0px" width="14" height="13" viewBox="0 0 14 13"><rect x="4.4" y="0.4" width="4.4" height="5.6" rx="2" fill="#ee5656"/><path d="M5.2 5.5H8.2V10.5H5.2Z" fill="#ee5656"/><ellipse cx="6.9" cy="11.3" rx="2.3" ry="0.9" fill="#ee5656"/><path d="M1.2 12.2L12.9 0.6" stroke="#ee5656" stroke-width="1.3"/></svg>
<div id="t264" class="T" style="left:1099.00px;top:532.12px;font-size:11.50px;color:#ececec;font-weight:normal;font-family:'Liberation Sans', sans-serif;transform:scaleX(0.9637);transform-origin:0 0;">iPhone Oleg</div>
<div class="a" style="left:1079px;top:551.3px;width:142px;height:80px;background:#222"></div>
<div id="t266" class="T" style="left:1126.80px;top:583.53px;font-size:16.20px;color:#f4f4f4;font-weight:bold;font-family:'Liberation Sans', sans-serif;transform:scaleX(0.9670);transform-origin:0 0;">admin</div>
<div class="a" style="left:1080px;top:614.3px;width:54.8px;height:17px;background:rgba(40,40,40,.78)"></div>
<svg class="a" style="left:1081px;top:617.0px" width="14" height="13" viewBox="0 0 14 13"><rect x="4.4" y="0.4" width="4.4" height="5.6" rx="2" fill="#ee5656"/><path d="M5.2 5.5H8.2V10.5H5.2Z" fill="#ee5656"/><ellipse cx="6.9" cy="11.3" rx="2.3" ry="0.9" fill="#ee5656"/><path d="M1.2 12.2L12.9 0.6" stroke="#ee5656" stroke-width="1.3"/></svg>
<div id="t269" class="T" style="left:1099.00px;top:617.12px;font-size:11.50px;color:#ececec;font-weight:normal;font-family:'Liberation Sans', sans-serif;transform:scaleX(0.9895);transform-origin:0 0;">admin</div>
<div class="a" style="left:1079px;top:636.3px;width:142px;height:80px;background:#222"></div>
<div id="t271" class="T" style="left:1085.00px;top:668.53px;font-size:16.20px;color:#f4f4f4;font-weight:bold;font-family:'Liberation Sans', sans-serif;transform:scaleX(0.9757);transform-origin:0 0;">Дмитро Бірюков</div>
<div class="a" style="left:1080px;top:699.3px;width:107.5px;height:17px;background:rgba(40,40,40,.78)"></div>
<svg class="a" style="left:1081px;top:702.0px" width="14" height="13" viewBox="0 0 14 13"><rect x="4.4" y="0.4" width="4.4" height="5.6" rx="2" fill="#ee5656"/><path d="M5.2 5.5H8.2V10.5H5.2Z" fill="#ee5656"/><ellipse cx="6.9" cy="11.3" rx="2.3" ry="0.9" fill="#ee5656"/><path d="M1.2 12.2L12.9 0.6" stroke="#ee5656" stroke-width="1.3"/></svg>
<div id="t274" class="T" style="left:1099.00px;top:702.12px;font-size:11.50px;color:#ececec;font-weight:normal;font-family:'Liberation Sans', sans-serif;transform:scaleX(0.9864);transform-origin:0 0;">Дмитро Бірюков</div>
<div id="t275" class="T" style="left:13.00px;top:799.25px;font-size:11.70px;color:#cdcdcd;font-weight:normal;font-family:'Liberation Sans', sans-serif;transform:scaleX(0.9365);transform-origin:0 0;">Включить звук</div>
<div id="t276" class="T" style="left:113.00px;top:799.25px;font-size:11.70px;color:#cdcdcd;font-weight:normal;font-family:'Liberation Sans', sans-serif;transform:scaleX(0.9156);transform-origin:0 0;">Начать видео</div>
<div id="t277" class="T" style="left:346.00px;top:799.25px;font-size:11.70px;color:#cdcdcd;font-weight:normal;font-family:'Liberation Sans', sans-serif;transform:scaleX(0.9312);transform-origin:0 0;">Участники</div>
<div id="t278" class="T" style="left:462.00px;top:799.25px;font-size:11.70px;color:#cdcdcd;font-weight:normal;font-family:'Liberation Sans', sans-serif;transform:scaleX(0.8612);transform-origin:0 0;">Чат</div>
<div id="t279" class="T" style="left:517.00px;top:799.25px;font-size:11.70px;color:#2bd05d;font-weight:normal;font-family:'Liberation Sans', sans-serif;transform:scaleX(0.9294);transform-origin:0 0;">Демонстрация экрана</div>
<div id="t280" class="T" style="left:653.80px;top:799.25px;font-size:11.70px;color:#cdcdcd;font-weight:normal;font-family:'Liberation Sans', sans-serif;transform:scaleX(0.8916);transform-origin:0 0;">Запись</div>
<div id="t281" class="T" style="left:714.50px;top:799.25px;font-size:11.70px;color:#cdcdcd;font-weight:normal;font-family:'Liberation Sans', sans-serif;transform:scaleX(0.9219);transform-origin:0 0;">Показать субтитры</div>
<div id="t282" class="T" style="left:832.00px;top:799.25px;font-size:11.70px;color:#cdcdcd;font-weight:normal;font-family:'Liberation Sans', sans-serif;transform:scaleX(0.9080);transform-origin:0 0;">Реакции</div>
<div id="t283" class="T" style="left:895.50px;top:799.25px;font-size:11.70px;color:#cdcdcd;font-weight:normal;font-family:'Liberation Sans', sans-serif;transform:scaleX(0.9724);transform-origin:0 0;">Приложения</div>
<div id="t284" class="T" style="left:976.00px;top:799.25px;font-size:11.70px;color:#cdcdcd;font-weight:normal;font-family:'Liberation Sans', sans-serif;transform:scaleX(0.9538);transform-origin:0 0;">Доски сообщений</div>
<svg class="a" style="left:38px;top:773px" width="23" height="22" viewBox="0 0 23 22"><rect x="8" y="1" width="7" height="12" rx="3.5" fill="#bdbdbd"/><path d="M5 9.5C5 13.5 8 15.5 11.5 15.5S18 13.5 18 9.5" stroke="#bdbdbd" stroke-width="1.5" fill="none"/><path d="M11.5 15.5V19M8 19.5H15" stroke="#bdbdbd" stroke-width="1.5"/><path d="M2 21L21 2" stroke="#e0504a" stroke-width="1.8"/></svg>
<svg class="a" style="left:135px;top:773px" width="25" height="22" viewBox="0 0 25 22"><rect x="1" y="5" width="15" height="12" rx="2" fill="#bdbdbd"/><path d="M17 9L23 5.5V16.5L17 13Z" fill="#bdbdbd"/><path d="M2 21.5L21 2" stroke="#e0504a" stroke-width="1.8"/></svg>
<svg class="a" style="left:78.5px;top:781px" width="9" height="7" viewBox="0 0 9 7"><path d="M1.5 5L4.5 2L7.5 5" stroke="#c5c5c5" stroke-width="1.5" fill="none"/></svg>
<svg class="a" style="left:185.5px;top:781px" width="9" height="7" viewBox="0 0 9 7"><path d="M1.5 5L4.5 2L7.5 5" stroke="#c5c5c5" stroke-width="1.5" fill="none"/></svg>
<svg class="a" style="left:415.0px;top:781px" width="9" height="7" viewBox="0 0 9 7"><path d="M1.5 5L4.5 2L7.5 5" stroke="#c5c5c5" stroke-width="1.5" fill="none"/></svg>
<svg class="a" style="left:495.0px;top:781px" width="9" height="7" viewBox="0 0 9 7"><path d="M1.5 5L4.5 2L7.5 5" stroke="#c5c5c5" stroke-width="1.5" fill="none"/></svg>
<svg class="a" style="left:802.0px;top:781px" width="9" height="7" viewBox="0 0 9 7"><path d="M1.5 5L4.5 2L7.5 5" stroke="#c5c5c5" stroke-width="1.5" fill="none"/></svg>
<svg class="a" style="left:873.0px;top:781px" width="9" height="7" viewBox="0 0 9 7"><path d="M1.5 5L4.5 2L7.5 5" stroke="#c5c5c5" stroke-width="1.5" fill="none"/></svg>
<svg class="a" style="left:360px;top:776px" width="24" height="17" viewBox="0 0 24 17"><circle cx="8" cy="4.5" r="4" fill="#bdbdbd"/><path d="M0.5 16.5C0.5 11.5 3.5 9.5 8 9.5S15.5 11.5 15.5 16.5Z" fill="#bdbdbd"/><circle cx="17" cy="5" r="3.3" fill="#bdbdbd"/><path d="M13 10.5C14 10 15.5 9.8 17 9.8C20.5 9.8 23.5 11.5 23.5 16.5H16.5C16.5 13.5 15 11.5 13 10.5Z" fill="#bdbdbd"/></svg>
<div id="t294" class="T" style="left:387.00px;top:779.58px;font-size:10.50px;color:#cfcfcf;font-weight:bold;font-family:'Liberation Sans', sans-serif;transform:scaleX(0.8258);transform-origin:0 0;">113</div>
<svg class="a" style="left:460px;top:776px" width="21" height="17" viewBox="0 0 21 17"><path d="M3 0.5H18A2.5 2.5 0 0 1 20.5 3V10A2.5 2.5 0 0 1 18 12.5H8L4 16.5V12.5H3A2.5 2.5 0 0 1 0.5 10V3A2.5 2.5 0 0 1 3 0.5Z" fill="#bdbdbd"/></svg>
<div class="a" style="left:473px;top:771.5px;width:14px;height:13px;border-radius:7px;background:#e53935"></div>
<div id="t297" class="T" style="left:477.30px;top:774.00px;font-size:10.00px;color:#fff;font-weight:bold;font-family:'Liberation Sans', sans-serif;transform:scaleX(0.8989);transform-origin:0 0;">1</div>
<div class="a" style="left:562px;top:776px;width:22px;height:16px;border-radius:3px;background:#23d160"></div>
<svg class="a" style="left:568px;top:779px" width="10" height="10" viewBox="0 0 10 10"><path d="M5 9V2M2 5L5 2L8 5" stroke="#111" stroke-width="1.8" fill="none"/></svg>
<div class="a" style="left:662px;top:775.5px;width:18px;height:18px;border-radius:50%;border:1.6px solid #c8c8c8"></div>
<div class="a" style="left:665px;top:778.5px;width:12px;height:12px;border-radius:50%;background:#bdbdbd"></div>
<div class="a" style="left:751px;top:776px;width:22px;height:16px;border-radius:2px;background:#c4c4c4"></div>
<div id="t303" class="T" style="left:754.30px;top:780.15px;font-size:9.00px;color:#2a2a2a;font-weight:bold;font-family:'Liberation Sans', sans-serif;transform:scaleX(1.1538);transform-origin:0 0;">CC</div>
<svg class="a" style="left:843px;top:774px" width="22" height="20" viewBox="0 0 22 20"><circle cx="9.5" cy="11.5" r="7.5" fill="#bdbdbd"/><circle cx="7" cy="10" r="1" fill="#1b1b1b"/><circle cx="12" cy="10" r="1" fill="#1b1b1b"/><path d="M6 13C7.5 15 11.5 15 13 13" stroke="#1b1b1b" stroke-width="1.3" fill="none"/><path d="M17 0.5V6.5M14 3.5H20" stroke="#bdbdbd" stroke-width="1.5"/></svg>
<svg class="a" style="left:920.5px;top:777.5px" width="16" height="16" viewBox="0 0 16 16"><path d="M1 6V3A2 2 0 0 1 3 1H7.5M15 9V13A2 2 0 0 1 13 15H8.5" stroke="#bdbdbd" stroke-width="1.5" fill="none"/><circle cx="12.2" cy="3.8" r="2.4" stroke="#bdbdbd" stroke-width="1.5" fill="none"/><circle cx="3.8" cy="12.2" r="2.4" stroke="#bdbdbd" stroke-width="1.5" fill="none"/></svg>
<svg class="a" style="left:1012px;top:775px" width="20" height="17" viewBox="0 0 20 17"><path d="M8 14H3A2 2 0 0 1 1 12V3A2 2 0 0 1 3 1H17A2 2 0 0 1 19 3V10" stroke="#bdbdbd" stroke-width="1.5" fill="none"/><rect x="9" y="11.5" width="10" height="4.5" rx="2" fill="#bdbdbd"/></svg>
<div class="a" style="left:1214px;top:780.5px;width:54px;height:24px;border-radius:5px;background:#c1272d"></div>
<div id="t308" class="T" style="left:1224.00px;top:786.95px;font-size:11.00px;color:#fff;font-weight:bold;font-family:'Liberation Sans', sans-serif;transform:scaleX(0.9103);transform-origin:0 0;">Выйти</div>
</body></html>
